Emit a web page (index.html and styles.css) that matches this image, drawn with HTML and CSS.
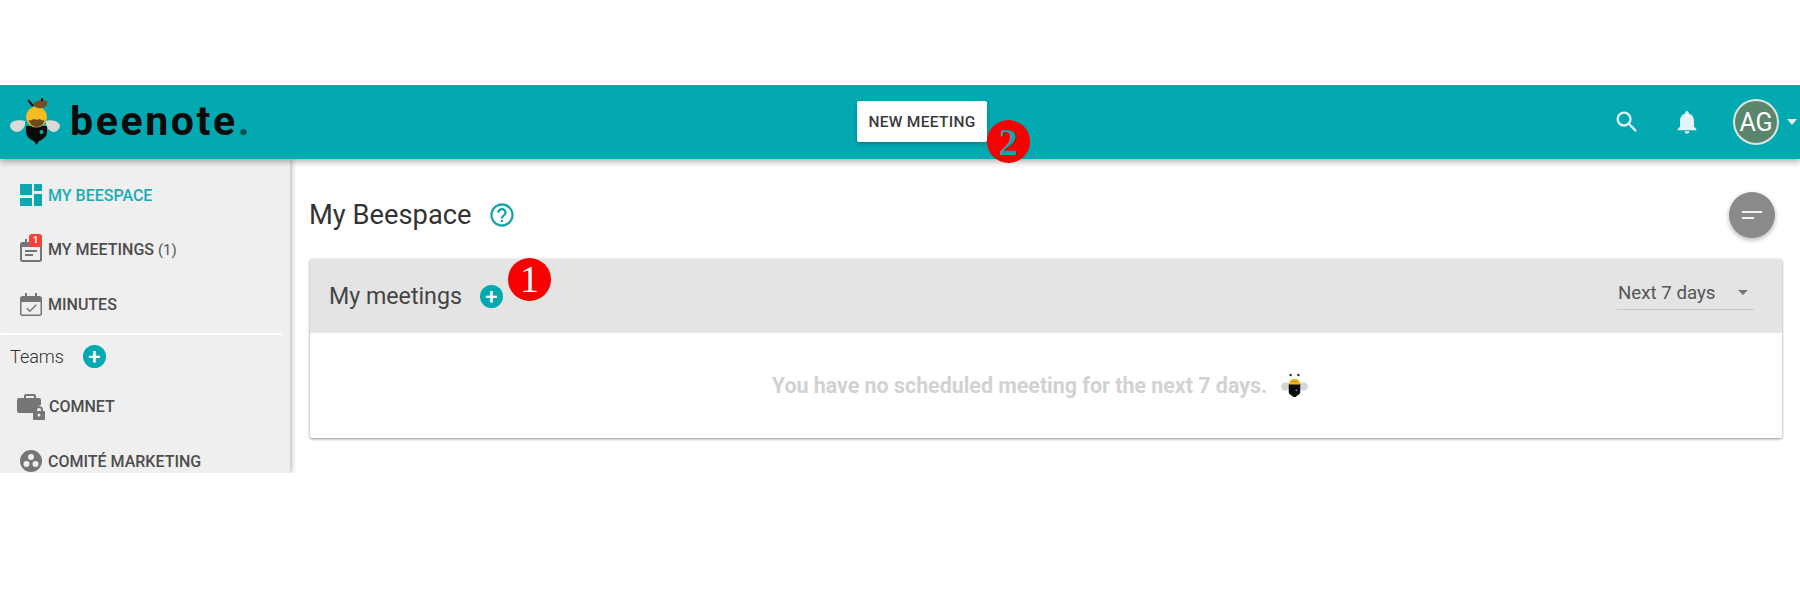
FILE: index.html
```html
<!DOCTYPE html>
<html lang="en">
<head>
<meta charset="utf-8">
<title>beenote</title>
<link rel="stylesheet" href="styles.css">
</head>
<body>
<div class="app">
  <header class="topbar">
    <div class="brand">
      <svg class="bee-logo" viewBox="0 0 52 50" width="52" height="50" aria-hidden="true">
        <path d="M15 25c-2-1-8-1-11 0-3 1-4 3-4 5s3 6 7 6c4 0 7-4 8-7z" fill="#d9d9d9"/>
        <path d="M36 25c2-1 6-1 9 0 3 1 5 3 5 5s-3 6-6 6c-4 0-7-4-8-7z" fill="#d9d9d9"/>
        <path d="M16 30h21v6c0 5-5 8-8 9l-2.500 4-2.500-4c-3-1-8-4-8-9z" fill="#0a0a0a"/>
        <circle cx="26.500" cy="21" r="10.500" fill="#f5bd1f"/>
        <path d="M18.500 24c2 1 3 0 5-1 2 1 4 1 6 0 2 1 3 2 5 1-1 5-4 7-8 7s-6.500-3-8-7z" fill="#6b4a22"/>
        <path d="M23 9c1-4 8-6 14-4 1 3-1 7-5 7-4 1-7-1-9-3z" fill="#7a4a22"/>
        <path d="M23 10l-5-6" stroke="#111" stroke-width="2" fill="none"/>
        <path d="M32 5l0-3" stroke="#111" stroke-width="2" fill="none"/>
        <circle cx="31.500" cy="36" r="2" fill="#0fa6ad"/>
      </svg>
      <span class="wordmark">beenote<span class="wordmark-dot">.</span></span>
    </div>
    <div class="topbar-center">
      <button class="new-meeting" type="button">NEW MEETING<span class="callout callout-two">2</span></button>
    </div>
    <div class="topbar-actions">
      <svg class="top-icon" viewBox="0 0 24 24" width="28" height="28" aria-hidden="true"><path d="M15.500 14h-.79l-.28-.27A6.470 6.470 0 0 0 16 9.500 6.500 6.500 0 1 0 9.500 16c1.610 0 3.090-.59 4.230-1.570l.27.28v.79l5 4.990L20.490 19l-4.990-5zm-6 0C7.010 14 5 11.990 5 9.500S7.010 5 9.500 5 14 7.010 14 9.500 11.990 14 9.500 14z"/></svg>
      <svg class="top-icon" viewBox="0 0 24 24" width="28" height="28" aria-hidden="true"><path d="M12 22c1.100 0 2-.9 2-2h-4c0 1.100.89 2 2 2zm6-6v-5c0-3.070-1.640-5.640-4.500-6.320V4c0-.83-.67-1.500-1.500-1.500s-1.500.67-1.500 1.500v.68C7.630 5.360 6 7.920 6 11v5l-2 2v1h16v-1l-2-2z"/></svg>
      <div class="avatar">AG</div>
      <span class="avatar-caret"></span>
    </div>
  </header>
  <div class="layout">
    <nav class="sidebar">
      <a class="nav-item nav-active">
        <svg class="nav-icon" viewBox="0 0 24 24" width="24" height="24" aria-hidden="true"><path d="M1 1h12v11H1zM15 1h8v7h-8zM1 15h12v8H1zM15 11h8v12h-8z"/></svg>
        <span>MY BEESPACE</span>
      </a>
      <a class="nav-item">
        <span class="icon-wrap">
          <svg class="nav-icon" viewBox="0 0 24 24" width="24" height="24" aria-hidden="true"><path d="M6 1h2v3h8V1h2v3h2.500A2.500 2.500 0 0 1 23 6.500v15a2.500 2.500 0 0 1-2.500 2.500h-17A2.500 2.500 0 0 1 1 21.500v-15A2.500 2.500 0 0 1 3.500 4H6zM3 9v12.500c0 .3.200.5.500.5h17c.3 0 .5-.2.500-.5V9zm3 3h12v2H6zm0 4h8v2H6z"/></svg>
          <span class="count-badge">1</span>
        </span>
        <span>MY MEETINGS <span class="nav-count">(1)</span></span>
      </a>
      <a class="nav-item">
        <svg class="nav-icon" viewBox="0 0 24 24" width="24" height="24" aria-hidden="true"><path d="M6 1h2v3h8V1h2v3h2.500A2.500 2.500 0 0 1 23 6.500v15a2.500 2.500 0 0 1-2.500 2.500h-17A2.500 2.500 0 0 1 1 21.500v-15A2.500 2.500 0 0 1 3.500 4H6zM2.500 10v11.500c0 .6.400 1 1 1h17c.6 0 1-.4 1-1V10zm14.300 2.300 1 1-7 7-3.600-3.600 1-1 2.600 2.600z"/></svg>
        <span>MINUTES</span>
      </a>
      <div class="nav-divider"></div>
      <div class="teams-row">
        <span>Teams</span>
        <span class="plus-btn">+</span>
      </div>
      <a class="nav-item team-item">
        <svg class="team-icon" viewBox="0 0 30 27" width="30" height="27" aria-hidden="true"><path d="M10 1h8a2 2 0 0 1 2 2v2h3a2 2 0 0 1 2 2v5a7 7 0 0 0-6 7v1H3a2 2 0 0 1-2-2V7a2 2 0 0 1 2-2h5V3a2 2 0 0 1 2-2zm0 2v2h8V3z" fill-rule="evenodd"/><path d="M23 13a4 4 0 0 1 4 4v1h1a1 1 0 0 1 1 1v7a1 1 0 0 1-1 1h-10a1 1 0 0 1-1-1v-7a1 1 0 0 1 1-1h1v-1a4 4 0 0 1 4-4zm0 2a2 2 0 0 0-2 2v1h4v-1a2 2 0 0 0-2-2zm0 5.500a1.500 1.500 0 1 0 0 3 1.500 1.500 0 0 0 0-3z" fill-rule="evenodd"/></svg>
        <span>COMNET</span>
      </a>
      <a class="nav-item">
        <svg class="nav-icon" viewBox="0 0 24 24" width="24" height="24" aria-hidden="true"><path d="M12 1a11 11 0 1 0 0 22 11 11 0 0 0 0-22zm0 4a3 3 0 1 1 0 6 3 3 0 0 1 0-6zM7.500 12a3 3 0 1 1 0 6 3 3 0 0 1 0-6zm9 0a3 3 0 1 1 0 6 3 3 0 0 1 0-6z" fill-rule="evenodd"/></svg>
        <span>COMITÉ MARKETING</span>
      </a>
    </nav>
    <main class="content">
      <div class="page-head">
        <h1>My Beespace</h1>
        <svg class="help" viewBox="0 0 24 24" width="28" height="28" aria-hidden="true"><path d="M11 18h2v-2h-2v2zm1-16C6.480 2 2 6.480 2 12s4.480 10 10 10 10-4.480 10-10S17.520 2 12 2zm0 18c-4.410 0-8-3.590-8-8s3.590-8 8-8 8 3.590 8 8-3.590 8-8 8zm0-14c-2.210 0-4 1.790-4 4h2c0-1.100.9-2 2-2s2 .9 2 2c0 2-3 1.750-3 5h2c0-2.250 3-2.500 3-5 0-2.210-1.790-4-4-4z"/></svg>
        <button class="fab" type="button" aria-label="Filter">
          <svg viewBox="0 0 20 8" width="20" height="8" aria-hidden="true"><path d="M0 0h20v2H0zM0 6h12v2H0z"/></svg>
        </button>
      </div>
      <section class="card">
        <div class="card-head">
          <h2>My meetings</h2>
          <span class="plus-btn">+<span class="callout callout-one">1</span></span>
          <div class="select"><span>Next 7 days</span><span class="select-caret"></span></div>
        </div>
        <div class="card-body">
          <span>You have no scheduled meeting for the next 7 days.</span>
          <svg class="mini-bee" viewBox="0 0 28 26" width="27" height="25" aria-hidden="true">
            <circle cx="4.500" cy="14" r="4.500" fill="#d6d6d6"/>
            <circle cx="23.500" cy="14" r="4.500" fill="#d6d6d6"/>
            <path d="M8 11h12v9c0 2-3 3-5 5h-2c-2-2-5-3-5-5z" fill="#0a0a0a"/>
            <path d="M8 12c0-4 3-6 6-6s6 2 6 6z" fill="#f3b81f"/>
            <path d="M11 9h6" stroke="#a8801c" stroke-width="1"/>
            <circle cx="10" cy="2" r="1.300" fill="#333"/>
            <circle cx="18" cy="2" r="1.300" fill="#333"/>
            <circle cx="16" cy="18" r="1" fill="#0fa6ad"/>
          </svg>
        </div>
      </section>
    </main>
  </div>
</div>
</body>
</html>
```

FILE: styles.css
```css
* { box-sizing: border-box; }
html, body { margin: 0; height: 100%; background: #fff; }
body {
  padding-top: 85px;
  font-family: Roboto, "Liberation Sans", sans-serif;
  color: #333;
  overflow: hidden;
}
.app { height: 388px; overflow: hidden; display: flex; flex-direction: column; }

.topbar {
  position: relative;
  z-index: 2;
  flex: 0 0 74px;
  display: grid;
  grid-template-columns: 1fr auto 1fr;
  align-items: center;
  background: #02a9b1;
  box-shadow: 0 3px 6px rgba(0, 0, 0, .3);
}
.brand { display: flex; align-items: center; padding-left: 10px; gap: 8px; }
.bee-logo { flex: none; margin-top: -2px; }
.wordmark {
  font-size: 41px;
  font-weight: 700;
  line-height: 1;
  letter-spacing: 2.600px;
  color: #0a0a0a;
  margin-top: -1px;
}
.wordmark-dot { color: #0a5258; }
.topbar-center { padding-left: 44px; }
.new-meeting {
  position: relative;
  display: block;
  width: 130px;
  height: 41px;
  margin-top: -1px;
  padding: 0;
  border: 0;
  border-radius: 2px;
  background: #fff;
  font: 500 15.500px Roboto, sans-serif;
  letter-spacing: .3px;
  color: #3a3a3a;
  box-shadow: 0 2px 4px rgba(0, 0, 0, .25);
}
.callout {
  position: absolute;
  width: 43px;
  height: 43px;
  border-radius: 50%;
  background: #f60000;
  display: flex;
  align-items: center;
  justify-content: center;
  font: 700 38px/1 "Liberation Serif", serif;
}
.callout-two { left: 130px; top: 19px; color: #15a2a8; }
.callout-one { left: 28px; top: -27px; color: #fff; font-weight: 400; }

.topbar-actions { display: flex; align-items: center; justify-content: flex-end; }
.top-icon { fill: #e2f5f6; }
.top-icon + .top-icon { margin-left: 32px; }
.avatar {
  width: 46px;
  height: 46px;
  margin-left: 32px;
  border-radius: 50%;
  border: 2px solid #dfe6e2;
  background: #5a866c;
  color: #fff;
  font-size: 25px;
  display: flex;
  align-items: center;
  justify-content: center;
}
.avatar-caret {
  margin: 0 3px 0 8px;
  border: 5.500px solid transparent;
  border-bottom: 0;
  border-top: 6px solid #e2f5f6;
}

.layout { flex: 1; display: flex; min-height: 0; }
.sidebar {
  position: relative;
  z-index: 1;
  flex: 0 0 290px;
  background: #efefef;
  box-shadow: 2px 0 5px rgba(0, 0, 0, .25);
  padding-top: 9px;
}
.nav-item {
  display: flex;
  align-items: center;
  height: 54.500px;
  padding-left: 19px;
  gap: 5px;
  font-size: 16px;
  font-weight: 500;
  color: #4d4d4d;
  white-space: nowrap;
}
.nav-icon { fill: #757575; flex: none; }
.nav-active { color: #17adb5; }
.nav-active .nav-icon { fill: #0ea7af; }
.nav-count { font-weight: 400; color: #555; font-size: 15px; }
.icon-wrap { position: relative; display: flex; }
.count-badge {
  position: absolute;
  left: 10px;
  top: -4px;
  width: 13px;
  height: 13px;
  border-radius: 3px;
  background: #f44336;
  color: #fff;
  font-size: 9px;
  font-weight: 700;
  line-height: 13px;
  text-align: center;
}
.nav-divider { height: 2px; width: 281px; margin: 1px 0 0 1px; background: #fff; }
.teams-row {
  display: flex;
  align-items: center;
  height: 45px;
  padding: 0 0 1px 10px;
  gap: 19px;
  font-size: 18px;
  font-weight: 300;
  color: #333;
}
.plus-btn {
  position: relative;
  flex: none;
  width: 23px;
  height: 23px;
  border-radius: 50%;
  background: #02a9b1;
  color: #fff;
  font-size: 22px;
  font-weight: 500;
  line-height: 23px;
  text-align: center;
}
.team-item { padding-left: 16px; gap: 3px; }
.team-icon { fill: #757575; flex: none; }

.content { flex: 1; min-width: 0; padding: 0 18px 0 20px; }
.page-head { display: flex; align-items: center; height: 100px; padding-top: 12px; }
.page-head h1 { margin: 0 0 0 -1px; font-size: 27.300px; font-weight: 400; color: #333; }
.help { fill: #17a5ad; margin-left: 16px; }
.fab {
  margin-left: auto;
  margin-right: 7px;
  width: 46px;
  height: 46px;
  padding: 0;
  border: 0;
  border-radius: 50%;
  background: #8a8a8a;
  box-shadow: 0 2px 5px rgba(0, 0, 0, .3);
  display: flex;
  align-items: center;
  justify-content: center;
}
.fab svg { fill: #f4f4f4; }
.card {
  background: #fff;
  border-radius: 2px;
  box-shadow: 0 1px 3px rgba(0, 0, 0, .45);
}
.card-head {
  display: flex;
  align-items: center;
  height: 74px;
  padding: 0 28px 0 19px;
  background: #e4e4e4;
}
.card-head h2 { margin: 0 18px 0 0; font-size: 23.200px; font-weight: 400; color: #444; }
.select {
  margin-left: auto;
  width: 137px;
  height: 33px;
  margin-top: -6px;
  padding: 0 6px 0 1px;
  border-bottom: 1px solid #c6c6c6;
  display: flex;
  align-items: center;
  justify-content: space-between;
  font-size: 18.700px;
  color: #555;
}
.select-caret {
  border: 5px solid transparent;
  border-bottom: 0;
  border-top: 5px solid #777;
}
.card-body {
  height: 105px;
  display: flex;
  align-items: center;
  justify-content: center;
  gap: 14px;
  font-size: 21.400px;
  font-weight: 700;
  color: #d2d2d2;
  padding-right: 12px;
}
.mini-bee { flex: none; }
```
